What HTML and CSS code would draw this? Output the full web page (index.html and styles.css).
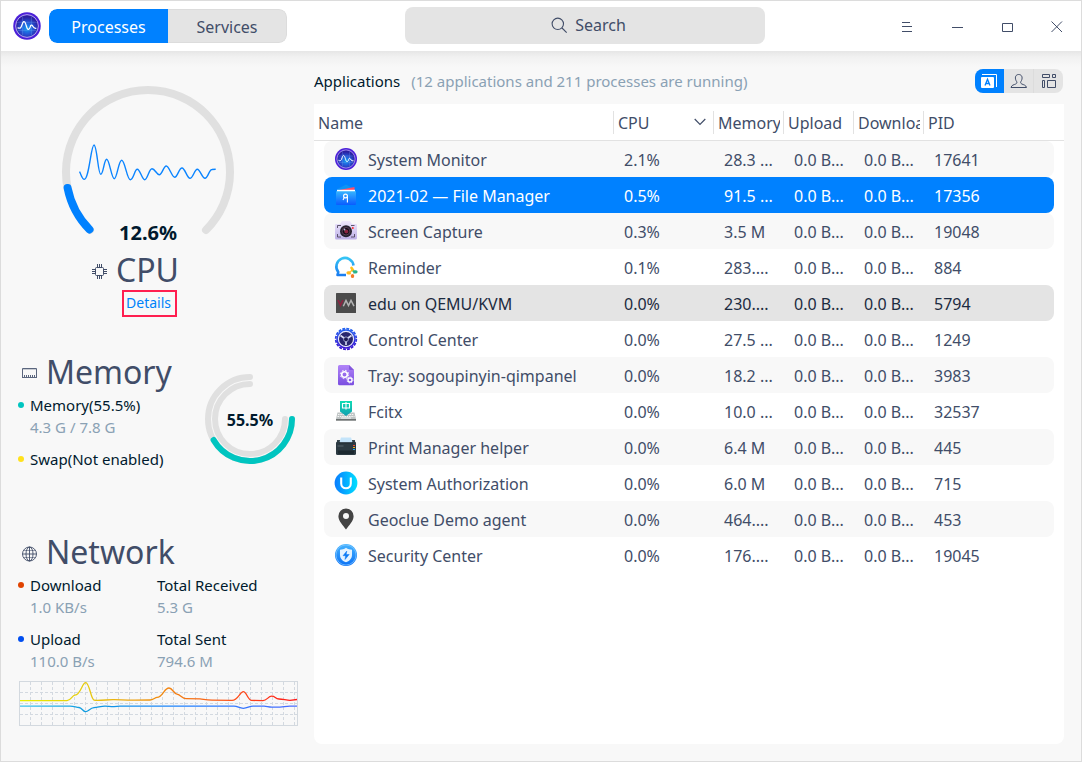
FILE: index.html
```html
<!DOCTYPE html>
<html lang="en">
<head>
<meta charset="utf-8">
<title>System Monitor</title>
<link rel="stylesheet" href="styles.css">
</head>
<body>
<svg class="defs" width="0" height="0">
  <defs>
    <radialGradient id="monFill" cx=".5" cy=".6" r=".5"><stop offset="0" stop-color="#12a0f0"/><stop offset=".5" stop-color="#2458d8"/><stop offset="1" stop-color="#2a1fa0"/></radialGradient>
    <linearGradient id="fmBody" x2="0" y2="1"><stop offset="0" stop-color="#35b4ff"/><stop offset="1" stop-color="#0a5cff"/></linearGradient>
    <linearGradient id="camBody" x2="0" y2="1"><stop offset="0" stop-color="#efe8fc"/><stop offset="1" stop-color="#bdb0e8"/></linearGradient>
    <linearGradient id="bubble" x2="0" y2="1"><stop offset="0" stop-color="#35c4f5"/><stop offset="1" stop-color="#1a7df0"/></linearGradient>
    <linearGradient id="gear" x2="0" y2="1"><stop offset="0" stop-color="#2463f0"/><stop offset="1" stop-color="#3a12d0"/></linearGradient>
    <linearGradient id="doc" x2="0" y2="1"><stop offset="0" stop-color="#b184f8"/><stop offset="1" stop-color="#7a4ee0"/></linearGradient>
    <linearGradient id="key" x2="0" y2="1"><stop offset="0" stop-color="#0fdcb4"/><stop offset="1" stop-color="#129fb0"/></linearGradient>
    <linearGradient id="union" x1="1" x2="0"><stop offset="0" stop-color="#00e0ff"/><stop offset="1" stop-color="#0a7cff"/></linearGradient>
    <linearGradient id="sec" x2="0" y2="1"><stop offset="0" stop-color="#45b4ff"/><stop offset="1" stop-color="#0a70f5"/></linearGradient>
    <linearGradient id="downLine" gradientUnits="userSpaceOnUse" x1="20" x2="297"><stop offset="0" stop-color="#e8f000"/><stop offset=".25" stop-color="#e6c810"/><stop offset=".5" stop-color="#f08c10"/><stop offset=".8" stop-color="#ff4a1c"/><stop offset="1" stop-color="#ff1818"/></linearGradient>
    <linearGradient id="upLine" gradientUnits="userSpaceOnUse" x1="20" x2="297"><stop offset="0" stop-color="#3cc4ee"/><stop offset=".25" stop-color="#0f9ae0"/><stop offset=".6" stop-color="#1f80ff"/><stop offset="1" stop-color="#4a6cff"/></linearGradient>
    <symbol id="monitor" viewBox="0 0 24 24">
      <circle cx="12" cy="12" r="11" fill="#4a1fd8"/>
      <circle cx="12" cy="12" r="9.100" fill="url(#monFill)" stroke="#b9a4f4" stroke-width=".8"/>
      <path d="M8.500 4v16M15.500 4v16M4 9h16M4 15.500h16" stroke="#7fb4f4" stroke-width=".4" opacity=".6"/>
      <path d="M4.500 13.300C6.500 14.500 7.200 13.500 8 11S9.800 7 11 10.500S12.200 15 13.500 14.500S14.500 10.800 15.800 11.300S16.700 14.500 19.500 13.800" fill="none" stroke="#fff" stroke-width="1"/>
    </symbol>
  </defs>
</svg>

<div class="window">
  <header class="titlebar">
    <svg class="logo" width="30" height="30"><use href="#monitor"/></svg>
    <nav class="tabs">
      <button class="tab tab-active">Processes</button>
      <button class="tab">Services</button>
    </nav>
    <div class="search">
      <svg width="17" height="17" viewBox="0 0 17 17" fill="none" stroke="#414d68" stroke-width="1.100"><circle cx="6.800" cy="6.800" r="5.700"/><path d="M11 11l4.700 4.700"/></svg>
      <span>Search</span>
    </div>
    <div class="controls">
      <svg width="50" height="50" viewBox="0 0 50 50" stroke="#414d68"><path d="M20 21.500h8M20 25.500h10M20 30.500h10"/></svg>
      <svg width="50" height="50" viewBox="0 0 50 50" stroke="#414d68"><path d="M20 26.500h11"/></svg>
      <svg width="50" height="50" viewBox="0 0 50 50" stroke="#414d68" fill="none"><path d="M20.500 22.500h10v8h-10z"/></svg>
      <svg width="49" height="50" viewBox="0 0 49 50" stroke="#414d68"><path d="M19.500 20.500l10.500 10.500M30 20.500L19.500 31"/></svg>
    </div>
  </header>

  <div class="body">
    <aside class="sidebar">
      <section class="cpu">
        <div class="gauge">
          <svg width="180" height="158" viewBox="58 82 180 158" fill="none">
            <path d="M90 230A82 82 0 1 1 206 230" stroke="#e0e0e0" stroke-width="8" stroke-linecap="round"/>
            <path d="M67.600 188A82 82 0 0 0 89.500 229.500" stroke="#f8f8f8" stroke-width="9"/>
            <path d="M67.600 188A82 82 0 0 0 89.500 229.500" stroke="#0081ff" stroke-width="8" stroke-linecap="round"/>
            <path d="M79.500 171.700C81 174 82 179.300 84.300 179.300C89 179.300 91 145 94 145S98 174.300 100.700 174.300S104 159.300 106.700 159.300S111.500 178.700 114.300 178.700S118.500 160.300 121.700 160.300S127 179.700 130.300 179.700S134.500 169.300 137.300 169.300S142 179.700 144.700 179.700S149 168.700 152 168.700S156.500 174.700 159.300 174.700S163.500 166 166.300 166S172 177.300 174.700 177.300S179 168 182 168S187 178.300 190 178.300S194.500 169.300 197.300 169.300S202 178.300 205 178.300S209 169.500 212 169.500L215.700 169.300" stroke="#0a84ff" stroke-width="1.400"/>
          </svg>
          <strong class="gauge-value">12.6%</strong>
        </div>
        <div class="cpu-title">
          <svg width="16" height="16" viewBox="0 0 16 16" fill="none" stroke="#414d68"><rect x="3.500" y="3.500" width="8" height="8" rx="1"/><path d="M5.500 0v3M7.500 0v3M9.500 0v3M5.500 12v3M7.500 12v3M9.500 12v3M0 5.500h3M0 7.500h3M0 9.500h3M12 5.500h3M12 7.500h3M12 9.500h3"/></svg>
          <h2>CPU</h2>
        </div>
        <a class="details">Details</a>
      </section>

      <section class="memory">
        <div class="memory-info">
          <div class="title">
            <svg width="16" height="16" viewBox="0 0 16 16" fill="none" stroke="#5b667e"><path d="M.5 12V2.500h14V12M0 11.500h15M2.500 9v3M4.500 9v3M6.500 9v3M8.500 9v3M10.500 9v3M12.500 9v3"/><path d="M1 3.500h13" opacity=".3"/></svg>
            <h2>Memory</h2>
          </div>
          <p class="label"><i class="dot teal"></i>Memory(55.5%)</p>
          <p class="value">4.3 G / 7.8 G</p>
          <p class="label second"><i class="dot yellow"></i>Swap(Not enabled)</p>
        </div>
        <div class="ring">
          <svg width="92" height="92" viewBox="204 373 92 92" fill="none" stroke-width="6" stroke-linecap="round">
            <path d="M250 377A42 42 0 1 0 292 419" stroke="#e0e0e0"/>
            <path d="M250 384A35 35 0 1 0 285 419" stroke="#e0e0e0"/>
            <path d="M213.600 440A42 42 0 0 0 292 419" stroke="#00c5c0"/>
          </svg>
          <strong class="ring-value">55.5%</strong>
        </div>
      </section>

      <section class="network">
        <div class="title">
          <svg width="16" height="16" viewBox="0 0 16 16" fill="none" stroke="#414d68" stroke-width=".9"><circle cx="7.500" cy="8" r="7"/><ellipse cx="7.500" cy="8" rx="3.500" ry="7"/><path d="M7.500 1v14M.5 8h14"/><path d="M1.800 4.500h11.400M1.800 11.500h11.400" opacity=".6"/></svg>
          <h2>Network</h2>
        </div>
        <div class="net-grid">
          <div><p class="label"><i class="dot orange"></i>Download</p><p class="value">1.0 KB/s</p></div>
          <div><p class="label">Total Received</p><p class="value">5.3 G</p></div>
          <div><p class="label"><i class="dot blue"></i>Upload</p><p class="value">110.0 B/s</p></div>
          <div><p class="label">Total Sent</p><p class="value">794.6 M</p></div>
        </div>
        <svg class="chart" width="279" height="45" viewBox="19 681 279 45" fill="none">
          <path d="M30.500 682v43M41.500 682v43M52.500 682v43M63.500 682v43M74.500 682v43M85.500 682v43M96.500 682v43M107.500 682v43M118.500 682v43M129.500 682v43M140.500 682v43M151.500 682v43M162.500 682v43M173.500 682v43M184.500 682v43M195.500 682v43M206.500 682v43M217.500 682v43M228.500 682v43M239.500 682v43M250.500 682v43M261.500 682v43M272.500 682v43M283.500 682v43M294.500 682v43M20 692.500h277M20 703.500h277M20 714.500h277" stroke="#d3d9e0" stroke-dasharray="3 2"/>
          <rect x="19.500" y="681.500" width="278" height="44" stroke="#d3d9df"/>
          <path d="M20 700.700H67C71 700.700 72 695.500 75 695.200C81 694.500 82 682.700 85.700 682.700S91 699.500 94 700.100S107 699.800 113 699.700S125 700.300 135 700.200L150 700C153 700 155 697.500 157 697.300C163 697 164 688 169 688C172.500 688 173.500 693.500 177 694.200C181 695 182 698.700 186 698.700L200 698.900C204 699.300 206 700 212 700.100L232 700.300C238 700.300 240 691.700 243.300 691.700S248 700.300 251.500 700.400L263 700.700C267 700.700 268 696.200 271.700 696.200S275 698.800 279 699S287 700.300 290 700.300L297 699.500" stroke="url(#downLine)" stroke-width="1.300"/>
          <path d="M20 706.100H70C74 706.100 76 707.300 79 707.500S83 711.700 85.700 711.700S90 708 94 707.700S101 706.100 105 706.100S109 706.600 114 706.600L120 706.200H234C238 706.200 239 708.300 243.300 708.300S249 706.200 253 706.200H264C267 706.200 268 707.100 272 707.100H280C284 707.100 285 706.100 290 706.100H297" stroke="url(#upLine)" stroke-width="1.300"/>
        </svg>
      </section>
    </aside>

    <main class="content">
      <div class="toolbar">
        <h1>Applications</h1>
        <span class="summary">(12 applications and 211 processes are running)</span>
        <div class="views">
          <span class="view view-active"><svg width="29" height="24" viewBox="0 0 29 24"><path d="M7 5.500h14.500v12.500" fill="none" stroke="#fff"/><rect x="6" y="8" width="13" height="11" rx="1" fill="#fff"/><path d="M10 16.500L12.500 10.300L15 16.500M11 14.500h3" fill="none" stroke="#0081ff" stroke-width="1.300"/></svg></span>
          <span class="view"><svg width="29" height="24" viewBox="0 0 29 24" fill="none" stroke="#414d68"><path d="M7 18.500h15.500C22 16 19.500 15.800 17.800 15C16 14 16.600 13 17.500 11.500C19 8 17.500 5.500 14.700 5.500S10.500 8 12 11.500C13 13 13.500 14 11.700 15C10 15.800 7.500 16 7 18.500z"/></svg></span>
          <span class="view"><svg width="29" height="24" viewBox="-2 0 29 24" fill="none" stroke="#414d68"><path d="M6.500 5.500h7v3h-7zM16.500 5.500h3v3h-3zM6.500 11.500h2v7h-2zM11.500 11.500h8v7h-8z"/></svg></span>
        </div>
      </div>

      <div class="table">
        <div class="thead">
          <div class="th">Name</div>
          <div class="th">CPU<svg class="sort" width="12" height="8" viewBox="0 0 12 8" fill="none" stroke="#414d68" stroke-width="1.200"><path d="M.7 1l5.300 5.300L11.300 1"/></svg></div>
          <div class="th">Memory</div>
          <div class="th">Upload</div>
          <div class="th">Download</div>
          <div class="th">PID</div>
        </div>
        <div class="tbody">
          <div class="row"><svg class="icon"><use href="#monitor"/></svg><span>System Monitor</span><span>2.1%</span><span>28.3 ...</span><span>0.0 B...</span><span>0.0 B...</span><span>17641</span></div>
          <div class="row selected"><svg class="icon" viewBox="0 0 24 24"><path d="M2.500 6.500L12 1.500l9.500 5z" fill="#0a94f5"/><path d="M3 7.500L20.500 4v4z" fill="#ff4a68"/><path d="M3 6.800h18V9H3z" fill="#fff"/><path d="M2 8.300h20V21a1 1 0 0 1-1 1H3a1 1 0 0 1-1-1z" fill="url(#fmBody)"/><circle cx="11.500" cy="13" r="1.900" fill="none" stroke="#fff" stroke-width="1.200"/><path d="M10.300 14.500L9 17M13.400 13.500v6" stroke="#fff" stroke-width="1.100"/></svg><span>2021-02 — File Manager</span><span>0.5%</span><span>91.5 ...</span><span>0.0 B...</span><span>0.0 B...</span><span>17356</span></div>
          <div class="row"><svg class="icon" viewBox="0 0 24 24"><path d="M6 5l2-3h8l2 3h4a1 1 0 0 1 1 1v13a1.500 1.500 0 0 1-1.500 1.500h-19A1.500 1.500 0 0 1 1 19V6a1 1 0 0 1 1-1z" fill="url(#camBody)"/><path d="M3.500 9V6.500H7M17 6.500h3.500M3.500 15v3H7M17 18h3.500v-3" fill="none" stroke="#50485f" stroke-width=".9"/><circle cx="12" cy="12.200" r="6" fill="#272330"/><circle cx="12" cy="12.200" r="3.800" fill="#101018" stroke="#6a4060" stroke-width=".8"/><circle cx="12.300" cy="12.500" r="2" fill="#8a2440"/><circle cx="10.500" cy="10.500" r=".9" fill="#b8bcd8"/><circle cx="18.800" cy="9" r="1" fill="#ff3030"/></svg><span>Screen Capture</span><span>0.3%</span><span>3.5 M</span><span>0.0 B...</span><span>0.0 B...</span><span>19048</span></div>
          <div class="row"><svg class="icon wide" viewBox="0 0 24 24"><path d="M12 20H3.500L4.300 17A8.600 8.600 0 1 1 19.500 10.500" fill="none" stroke="url(#bubble)" stroke-width="2.600" stroke-linejoin="round"/><path d="M17.500 12.800l1.300 2.200-1.300 1.600" fill="none" stroke="#ffc21c" stroke-width="2.600" stroke-linecap="round"/><path d="M22 16.800h-2.200" stroke="#28b48c" stroke-width="3.200" stroke-linecap="round"/><path d="M14 17.800h2" stroke="#ffb820" stroke-width="3.200" stroke-linecap="round"/><path d="M18.500 20.500v1" stroke="#f57a28" stroke-width="3.200" stroke-linecap="round"/><circle cx="18" cy="17.800" r="1.300" fill="#fff"/></svg><span>Reminder</span><span>0.1%</span><span>283....</span><span>0.0 B...</span><span>0.0 B...</span><span>884</span></div>
          <div class="row hover"><svg class="icon" viewBox="0 0 24 24"><rect x="2" y="2" width="20" height="20" rx=".5" fill="#4b4b4b"/><path d="M4 9l2.500 5.200L9 9" fill="none" stroke="#8c2442" stroke-width="1.700"/><path d="M9.300 15.200L12 9.500l2.500 5L17 9.500l3 5.700" fill="none" stroke="#b4b4b4" stroke-width="1.500"/></svg><span>edu on QEMU/KVM</span><span>0.0%</span><span>230....</span><span>0.0 B...</span><span>0.0 B...</span><span>5794</span></div>
          <div class="row"><svg class="icon" viewBox="0 0 24 24"><circle cx="12" cy="12" r="9.700" fill="url(#gear)"/><circle cx="12" cy="12" r="10.300" fill="none" stroke="url(#gear)" stroke-width="1.800" stroke-dasharray="2.900 1.145"/><circle cx="12" cy="12" r="7.600" fill="#28266c" stroke="#e6e8fa" stroke-width="1.200"/><path d="M12 12.500L6.500 8.500M12 12.500l5.500-4M12 12.500V18" stroke="#d8dcf2" stroke-width="1.600"/><circle cx="12" cy="12.300" r="2.400" fill="#1c1a50" stroke="#aeb4dc" stroke-width=".8"/></svg><span>Control Center</span><span>0.0%</span><span>27.5 ...</span><span>0.0 B...</span><span>0.0 B...</span><span>1249</span></div>
          <div class="row"><svg class="icon" viewBox="0 0 24 24"><path d="M5.500 2H15l5 5v14a1.200 1.200 0 0 1-1.200 1.200H5.500A1.500 1.500 0 0 1 4 20.700V3.500A1.500 1.500 0 0 1 5.500 2z" fill="url(#doc)"/><path d="M15 2l5 5h-4a1 1 0 0 1-1-1z" fill="#8458dc"/><g fill="none" stroke="#fff"><circle cx="10.500" cy="11.500" r="2.800" stroke-width="1.600"/><circle cx="10.500" cy="11.500" r="4.200" stroke-width="1" stroke-dasharray="1.700 1.600"/><circle cx="16" cy="17" r="2" stroke-width="1.300"/><circle cx="16" cy="17" r="3" stroke-width=".8" stroke-dasharray="1.300 1.060"/></g></svg><span>Tray: sogoupinyin-qimpanel</span><span>0.0%</span><span>18.2 ...</span><span>0.0 B...</span><span>0.0 B...</span><span>3983</span></div>
          <div class="row"><svg class="icon" viewBox="0 0 24 24"><path d="M3.500 13.500h17L22 20H2z" fill="#bfc4c4"/><path d="M2 20h20v1.700H2z" fill="#6d7272"/><path d="M4 15.500h16M3.500 17.500h17" stroke="#f6f6f6" stroke-dasharray="1.500 .8"/><path d="M7 19h10" stroke="#f6f6f6"/><path d="M6 2h12v10.500L12 17l-6-4.500z" fill="url(#key)"/><path d="M8.500 4.500h7v4.500h-7zM12 3v7.500" fill="none" stroke="#fff" stroke-width="1.100"/></svg><span>Fcitx</span><span>0.0%</span><span>10.0 ...</span><span>0.0 B...</span><span>0.0 B...</span><span>32537</span></div>
          <div class="row"><svg class="icon" viewBox="0 0 24 24"><path d="M3 5h3v3H3zM18 5h3v3h-3z" fill="#39474e"/><rect x="2" y="6.500" width="20" height="13.500" rx="1.500" fill="#2c3a42"/><path d="M5 7.700h14" stroke="#10181e" stroke-width="1"/><path d="M5.500 7.200L7 2.500h10l1.500 4.700z" fill="#c4e4fa"/><path d="M3.500 15.500h17l-1 3.500h-15z" fill="#1c2930"/><path d="M3.500 11h6" stroke="#82929a" stroke-width=".5"/><path d="M19 10.500h2" stroke="#f04a30" stroke-width="1.200"/><path d="M19 12.500h2" stroke="#f0b820" stroke-width="1"/><path d="M19 14.500h2" stroke="#28a8f0" stroke-width="1.200"/></svg><span>Print Manager helper</span><span>0.0%</span><span>6.4 M</span><span>0.0 B...</span><span>0.0 B...</span><span>445</span></div>
          <div class="row"><svg class="icon" viewBox="0 0 24 24"><circle cx="12" cy="12" r="11.400" fill="url(#union)"/><path d="M7.200 6.500v6a4.800 4.800 0 0 0 9.600 0v-6" fill="none" stroke="#fff" stroke-width="2.100"/></svg><span>System Authorization</span><span>0.0%</span><span>6.0 M</span><span>0.0 B...</span><span>0.0 B...</span><span>715</span></div>
          <div class="row"><svg class="icon" viewBox="0 0 24 24"><path fill-rule="evenodd" d="M12 1.500A7.600 7.600 0 0 0 4.400 9.200C4.400 14 9 18 12 22.500C15 18 19.600 14 19.600 9.200A7.600 7.600 0 0 0 12 1.500zM12 6a3 3 0 1 1 0 6a3 3 0 0 1 0-6z" fill="#444"/></svg><span>Geoclue Demo agent</span><span>0.0%</span><span>464....</span><span>0.0 B...</span><span>0.0 B...</span><span>453</span></div>
          <div class="row"><svg class="icon" viewBox="0 0 24 24"><circle cx="12" cy="12" r="11" fill="url(#sec)"/><circle cx="12" cy="12" r="10" fill="none" stroke="#86c8ff" stroke-width=".7"/><path d="M12 4.700c2 1.400 4 1.900 6 2v5c0 4-2.700 6.300-6 7.500c-3.300-1.200-6-3.500-6-7.500v-5C8 6.600 10 6.100 12 4.700z" fill="#e4f3ff"/><path d="M12.800 8L9 12.700h2.600L11 16.500l4.200-5h-3z" fill="#0a7af5" stroke="#0a7af5" stroke-width=".5"/></svg><span>Security Center</span><span>0.0%</span><span>176....</span><span>0.0 B...</span><span>0.0 B...</span><span>19045</span></div>
        </div>
      </div>
    </main>
  </div>
</div>
</body>
</html>
```
FILE: styles.css
```css
* { box-sizing: border-box; }

body {
  margin: 0;
  font-family: "Noto Sans", sans-serif;
  font-size: 16px;
  color: #414d68;
}

h1, h2, p { margin: 0; font-weight: 400; }
svg { display: block; flex: none; }
.defs { position: absolute; }

.window {
  width: 1082px;
  height: 762px;
  border: 1px solid #dcdcdc;
  background: #f8f8f8;
  overflow: hidden;
  display: flex;
  flex-direction: column;
}

/* Title bar */
.titlebar {
  flex: none;
  height: 50px;
  display: flex;
  align-items: center;
  background: #fff;
  padding-left: 11px;
}

.tabs {
  display: flex;
  width: 238px;
  height: 34px;
  margin-left: 7px;
  border-radius: 8px;
  overflow: hidden;
}
.tab {
  flex: none;
  width: 119px;
  border: 1px solid #dcdcdc;
  border-left: 0;
  border-radius: 0 8px 8px 0;
  background: #e4e4e4;
  color: #414d68;
  font: inherit;
  padding: 2px 0 0;
}
.tab-active {
  background: #0081ff;
  border: 0;
  border-radius: 8px 0 0 8px;
  color: #fff;
}

.search {
  flex: none;
  width: 360px;
  height: 37px;
  margin: 0 0 1px 118px;
  padding: 0 0 1px 7px;
  border-radius: 8px;
  background: #e4e4e4;
  display: flex;
  align-items: center;
  justify-content: center;
  gap: 7px;
}

.controls { display: flex; margin-left: auto; }

/* Page body */
.body {
  flex: 1;
  display: flex;
  background: linear-gradient(#e6e6e6, #f1f1f1 6px, #f8f8f8 16px);
}

.sidebar { width: 313px; }

.cpu {
  display: flex;
  flex-direction: column;
  align-items: center;
  width: 294px;
  padding-top: 31px;
}
.gauge { position: relative; height: 158px; }
.gauge-value {
  position: absolute;
  left: 0;
  right: 0;
  top: 137px;
  text-align: center;
  font-size: 20px;
  line-height: 28px;
  color: #001a2e;
}

h2 { font-size: 32px; line-height: 44px; }

.cpu-title {
  display: flex;
  align-items: center;
  gap: 8px;
  margin-top: 8px;
  margin-right: 27px;
  align-self: flex-end;
  width: 176px;
}
.cpu-title svg { margin-top: 3px; }
.details {
  height: 27px;
  width: 55px;
  margin-left: 3px;
  margin-top: -2px;
  padding-right: 2px;
  border: 2px solid #ff1f50;
  color: #0082fa;
  font-size: 14px;
  line-height: 21px;
  text-align: center;
}

.memory { display: flex; margin-top: 33px; }
.memory-info { width: 203px; }

.title {
  display: flex;
  align-items: center;
  gap: 8px;
  padding-left: 21px;
}
.title svg { margin-top: 3px; }

.label, .value {
  display: flex;
  align-items: center;
  font-size: 15px;
  line-height: 22px;
  padding-left: 29px;
  white-space: nowrap;
}
.label { color: #001a2e; }
.value { color: #8aa1b4; }
.second { margin-top: 10px; }

.dot {
  width: 6px;
  height: 6px;
  border-radius: 50%;
  margin: 0 6px 0 -12px;
}
.teal { background: #00c5c0; }
.yellow { background: #ffe11c; }
.orange { background: #e04300; }
.blue { background: #004ef0; }

.ring { position: relative; width: 92px; height: 92px; margin-top: 23px; }
.ring-value {
  position: absolute;
  inset: 0;
  text-align: center;
  line-height: 94px;
  color: #001a2e;
}

.network { margin-top: 60px; }
.net-grid {
  display: grid;
  grid-template-columns: 127px 1fr;
  row-gap: 10px;
}
.chart { margin: 9px 0 0 18px; }

/* Process list */
.content { flex: 1; padding: 17px 17px 17px 0; }

.toolbar {
  display: flex;
  align-items: center;
  height: 26px;
  font-size: 15px;
}
h1 { font-size: 15px; color: #001a2e; }
.summary { margin-left: 11px; color: #8aa1b4; }

.views {
  display: flex;
  margin-left: auto;
  margin-right: 1px;
  border-radius: 8px;
  background: #e4e4e4;
  overflow: hidden;
}
.view + .view + .view { border-left: 1px solid #dcdcdc; }
.view-active { background: #0081ff; }

.table {
  width: 750px;
  height: 640px;
  margin-top: 10px;
  background: #fff;
  border-radius: 0 0 8px 8px;
}
.thead {
  display: grid;
  grid-template-columns: 299px 100px 70px 70px 70px 1fr;
  align-items: center;
  height: 37px;
  border-bottom: 1px solid #e2e2e2;
}
.th {
  display: flex;
  align-items: center;
  justify-content: space-between;
  height: 23px;
  padding: 1px 0 0 4px;
  overflow: hidden;
  margin-right: 3px;
  white-space: nowrap;
}
.th + .th { border-left: 1px solid #e2e2e2; }
.sort { margin: 0 4px 1px 0; }

.tbody { padding: 0 10px; }
.row {
  display: grid;
  grid-template-columns: 34px 256px 100px 70px 70px 70px 1fr;
  align-items: center;
  height: 36px;
  padding-left: 10px;
  border-radius: 8px;
  line-height: 22px;
  white-space: nowrap;
}
.row span { padding-top: 1px; }
.row:nth-child(odd) { background: #f8f8f8; }
.row.selected { background: #0081ff; color: #fff; }
.row.hover { background: #e4e4e4; color: #1c2b40; }
.icon { width: 24px; height: 24px; }
.wide { overflow: visible; }
```
